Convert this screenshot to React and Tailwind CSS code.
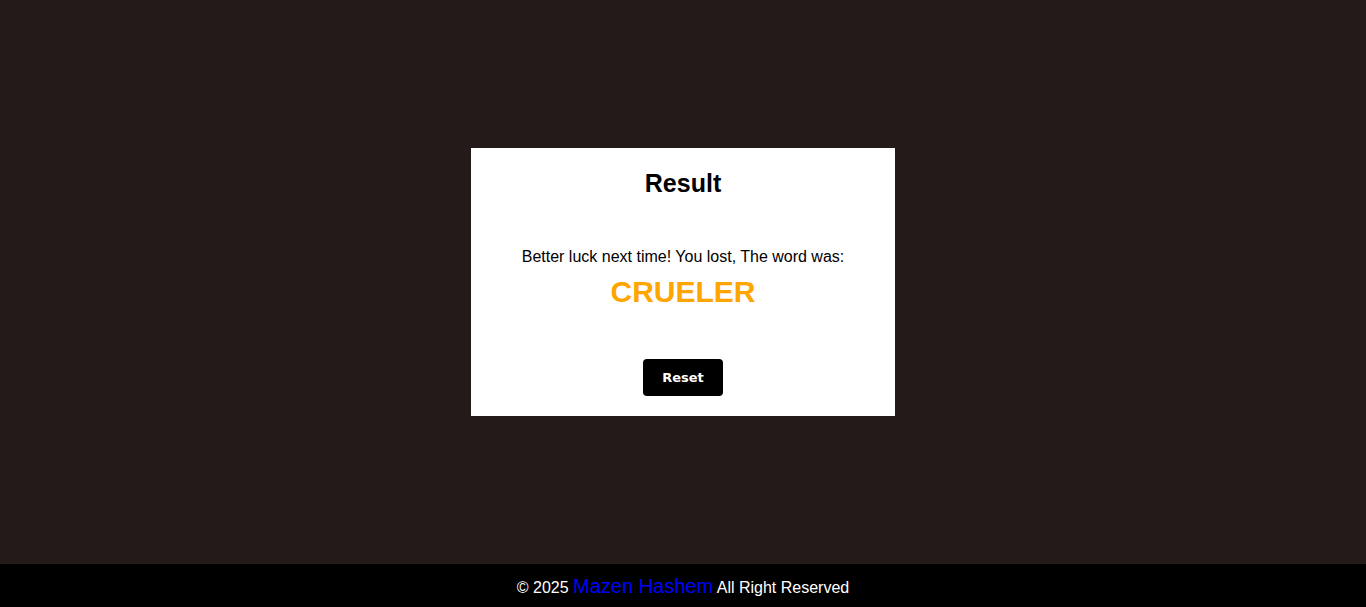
export default function App() {
  return (
    <div className="flex h-[607px] w-full flex-col bg-[#231a19] font-['Liberation_Sans',Arial,sans-serif]">
      <main className="flex flex-1 items-center justify-center">
        <div className="flex h-[268px] w-[424px] flex-col items-center bg-white pt-[21px] text-black">
          <h2 className="text-[25px] font-bold leading-[28px]">Result</h2>
          <p className="mt-[51px] text-[16px] leading-[18px]">Better luck next time! You lost, The word was:</p>
          <p className="mt-[7px] text-[30px] font-bold leading-[37px] text-[#ffa500]">CRUELER</p>
          <button className="mt-[49px] h-[37px] w-[80px] rounded-[4px] bg-black font-['DejaVu_Sans',Verdana,sans-serif] text-[13px] font-bold text-white">
            Reset
          </button>
        </div>
      </main>
      <footer className="flex h-[43px] items-center justify-center bg-black text-[16px] text-white">
        <span>
          © 2025 <span className="text-[20px] text-[#0000ff]">Mazen Hashem</span> All Right Reserved
        </span>
      </footer>
    </div>
  );
}
